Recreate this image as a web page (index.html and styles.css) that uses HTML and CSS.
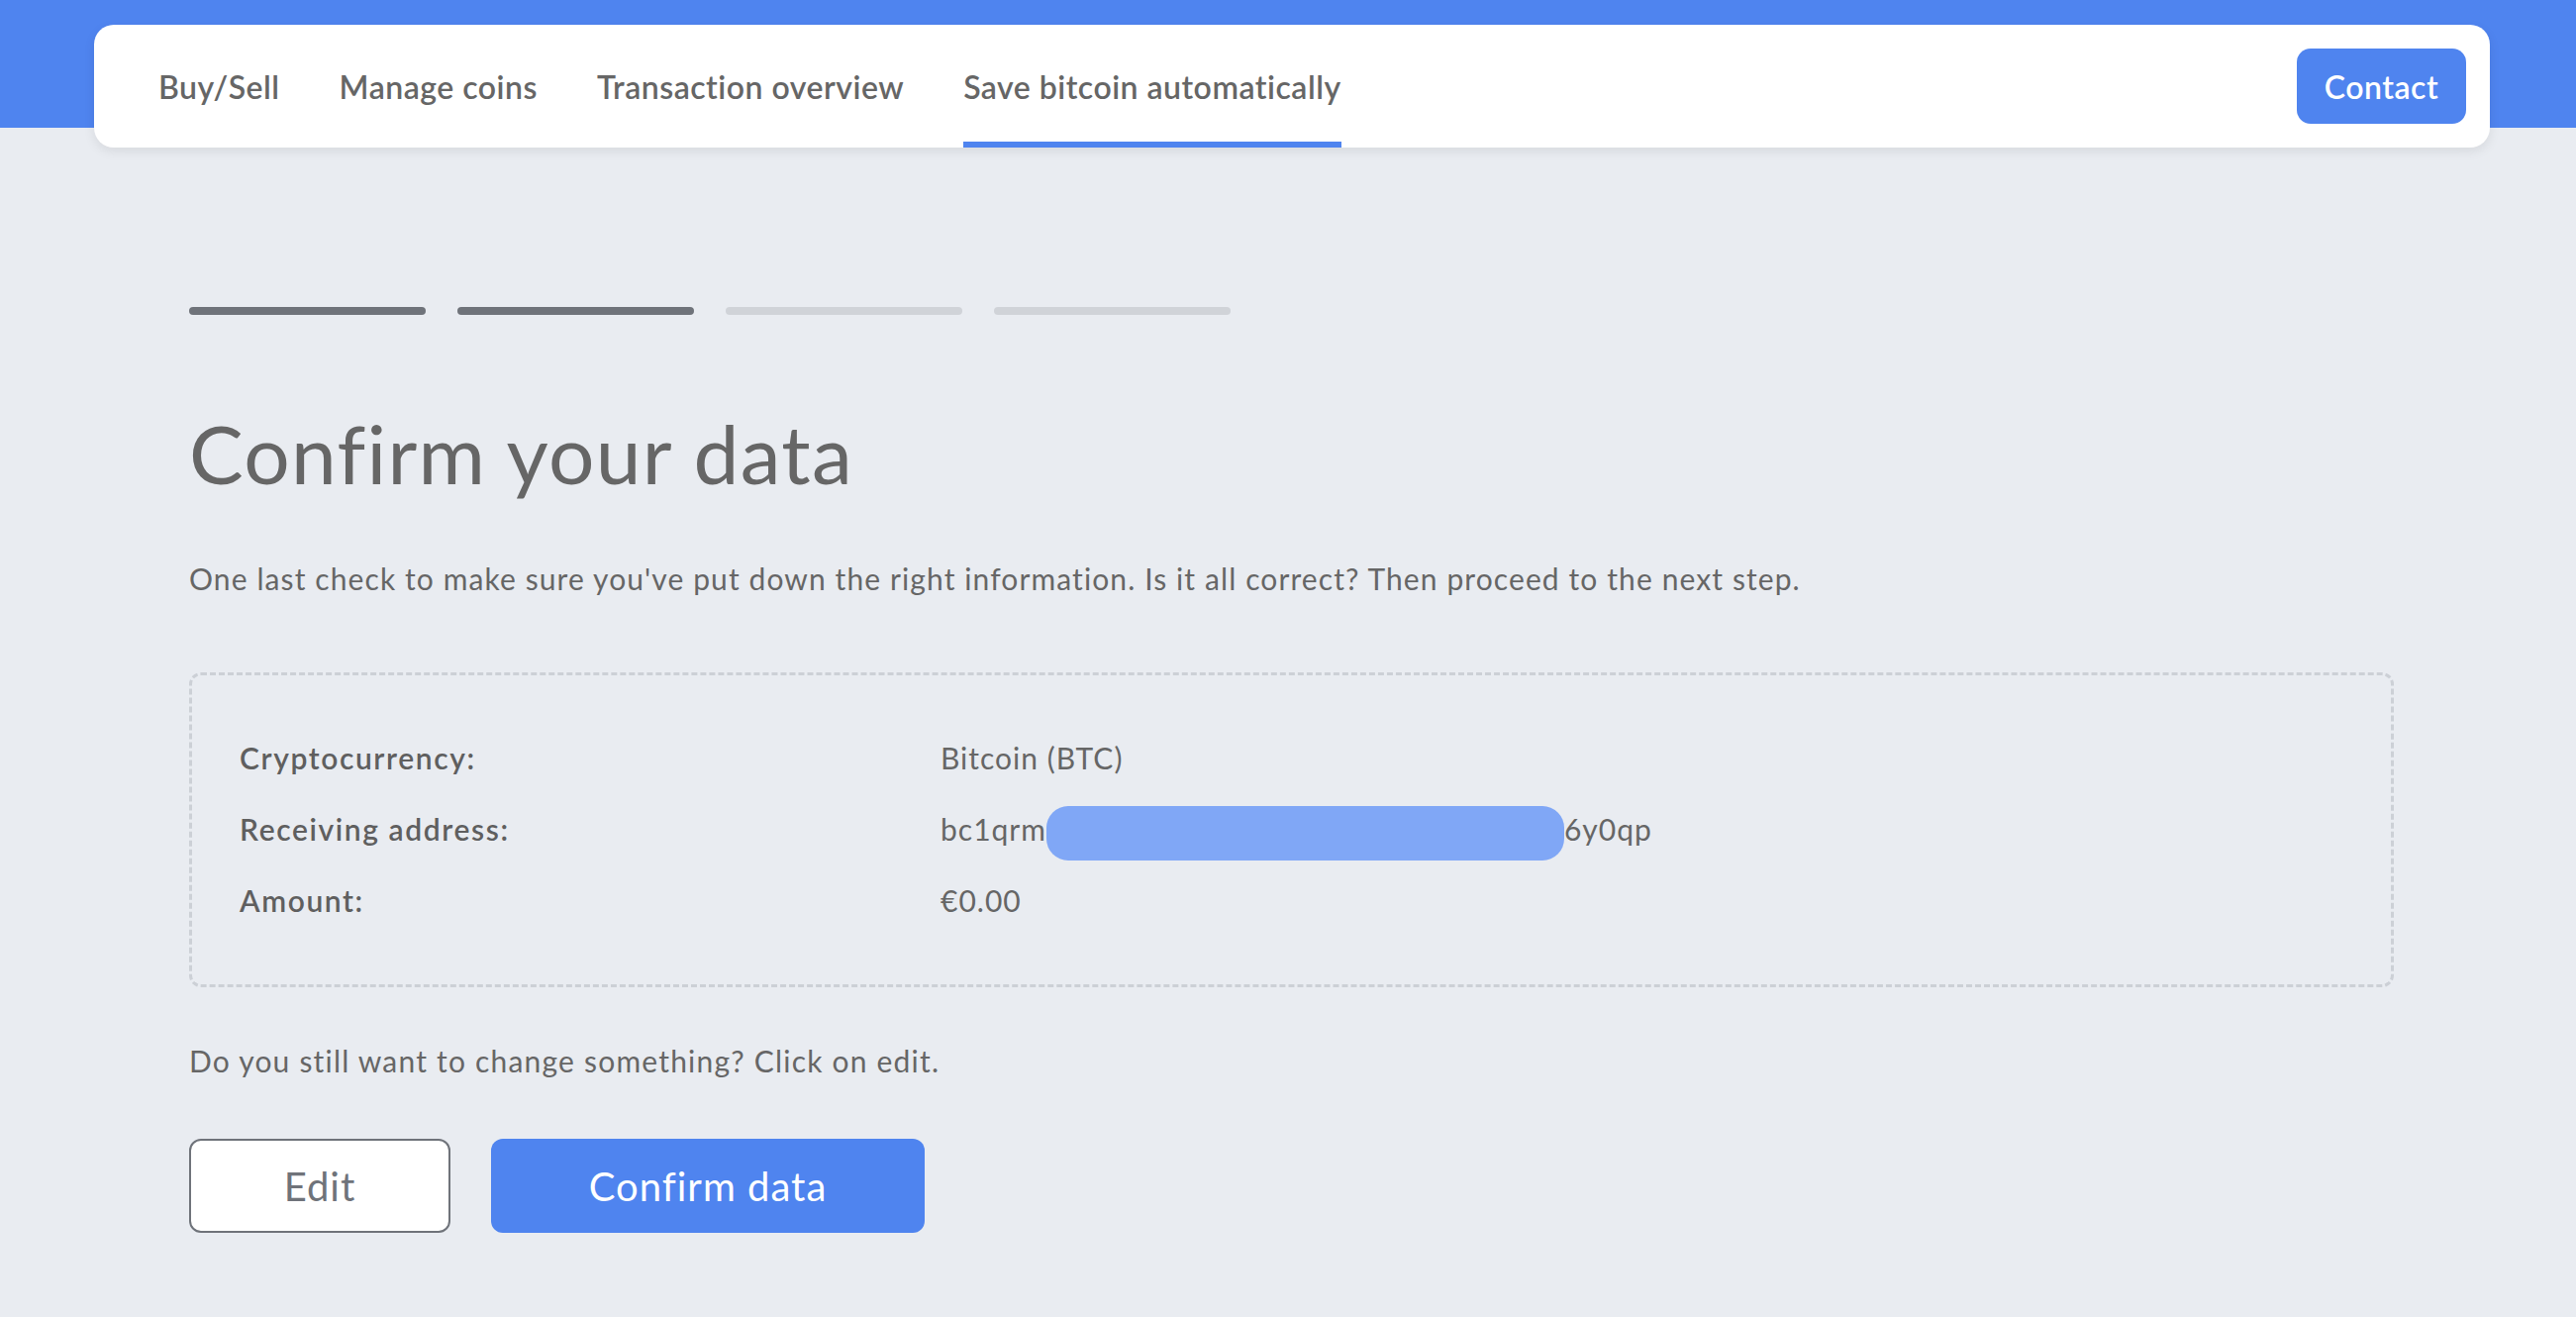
FILE: index.html
```html
<!DOCTYPE html>
<html lang="en">
<head>
  <meta charset="UTF-8">
  <meta name="viewport" content="width=device-width, initial-scale=1.0">
  <title>Save bitcoin automatically - Confirm your data</title>
  <link rel="stylesheet" href="styles.css">
</head>
<body>
  <header class="top">
    <nav class="nav-card">
      <ul class="nav-links">
        <li><a href="#">Buy/Sell</a></li>
        <li><a href="#">Manage coins</a></li>
        <li><a href="#">Transaction overview</a></li>
        <li><a href="#" class="active">Save bitcoin automatically</a></li>
      </ul>
      <a href="#" class="btn-contact">Contact</a>
    </nav>
  </header>

  <main class="content">
    <div class="steps">
      <span class="step done"></span>
      <span class="step done"></span>
      <span class="step"></span>
      <span class="step"></span>
    </div>

    <h1>Confirm your data</h1>
    <p class="intro">One last check to make sure you've put down the right information. Is it all correct? Then proceed to the next step.</p>

    <div class="summary">
      <div class="summary-row">
        <span class="label">Cryptocurrency:</span>
        <span class="value">Bitcoin (BTC)</span>
      </div>
      <div class="summary-row">
        <span class="label">Receiving address:</span>
        <span class="value">bc1qrm<span class="redacted"></span>6y0qp</span>
      </div>
      <div class="summary-row">
        <span class="label">Amount:</span>
        <span class="value">€0.00</span>
      </div>
    </div>

    <p class="hint">Do you still want to change something? Click on edit.</p>

    <div class="actions">
      <button class="btn btn-outline">Edit</button>
      <button class="btn btn-primary">Confirm data</button>
    </div>
  </main>
</body>
</html>
```

FILE: styles.css
```css
body {
  margin: 0;
  font-family: "Lato", "Noto Sans", sans-serif;
  color: #666666;
  background-color: #e9ecf1;
}

.top {
  padding: 25px 87px 0 95px;
  background: linear-gradient(to bottom, #4f84ef 0, #4f84ef 129px, transparent 129px);
}

.nav-card {
  display: flex;
  align-items: center;
  justify-content: space-between;
  height: 124px;
  padding: 0 24px 0 65px;
  background: #ffffff;
  border-radius: 20px;
  box-shadow: 0 4px 12px rgba(0, 0, 0, 0.08);
  overflow: hidden;
}

.nav-links {
  display: flex;
  gap: 60px;
  height: 100%;
  margin: 0;
  padding: 0;
  list-style: none;
}

.nav-links li {
  display: flex;
}

.nav-links a {
  display: flex;
  align-items: center;
  padding-top: 6px;
  border-bottom: 6px solid transparent;
  font-size: 32px;
  font-weight: 600;
  letter-spacing: 0.5px;
  color: #666666;
  text-decoration: none;
}

.nav-links a.active {
  border-bottom-color: #4f84ef;
}

.btn-contact {
  display: flex;
  align-items: center;
  justify-content: center;
  width: 171px;
  height: 76px;
  box-sizing: border-box;
  border-radius: 14px;
  background: #4f84ef;
  color: #ffffff;
  font-size: 32px;
  font-weight: 600;
  letter-spacing: 0.5px;
  text-decoration: none;
}

.content {
  padding: 161px 184px 40px 191px;
}

.steps {
  display: flex;
  gap: 32px;
}

.step {
  width: 239px;
  height: 8px;
  border-radius: 4px;
  background: #d0d3d8;
}

.step.done {
  background: #6f737a;
}

h1 {
  margin: 90px 0 0;
  font-size: 82px;
  font-weight: 400;
  line-height: 98px;
  letter-spacing: 1.3px;
  color: #666666;
}

.intro {
  margin: 56px 0 0;
  font-size: 30px;
  line-height: 45px;
  letter-spacing: 1.1px;
}

.summary {
  margin-top: 72px;
  padding: 47px 48px 49px;
  border: 3px dashed #ccd0d6;
  border-radius: 12px;
}

.summary-row {
  display: grid;
  grid-template-columns: 708px 1fr;
  line-height: 72px;
  font-size: 30px;
  letter-spacing: 1px;
}

.label {
  font-weight: 600;
  letter-spacing: 1.6px;
  color: #5f5f5f;
}

.redacted {
  display: inline-block;
  width: 523px;
  height: 55px;
  border-radius: 22px;
  background: #80a7f6;
  vertical-align: middle;
}

.hint {
  margin: 52px 0 0;
  font-size: 30px;
  line-height: 45px;
  letter-spacing: 1.2px;
}

.actions {
  display: flex;
  gap: 41px;
  margin-top: 56px;
}

.btn {
  height: 95px;
  border-radius: 12px;
  font-family: inherit;
  font-size: 40px;
  letter-spacing: 1px;
  cursor: pointer;
}

.btn-outline {
  width: 264px;
  background: #ffffff;
  border: 2px solid #6f737a;
  color: #6f737a;
}

.btn-primary {
  width: 438px;
  background: #4f84ef;
  border: none;
  color: #ffffff;
}
```
